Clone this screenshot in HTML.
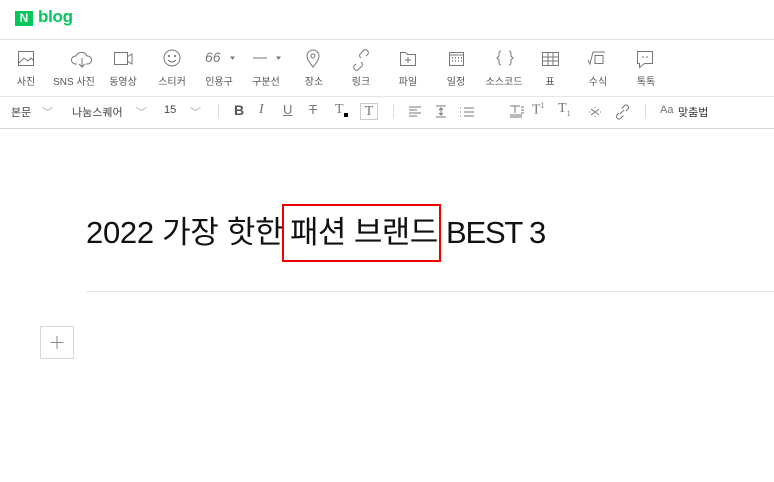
<!DOCTYPE html>
<html><head><meta charset="utf-8"><style>
*{margin:0;padding:0;box-sizing:border-box}
body{width:774px;height:482px;background:#fff;position:relative;overflow:hidden;font-family:"Liberation Sans","Noto Sans CJK KR",sans-serif;color:#333}
.a{position:absolute}
.hl{position:absolute;left:0;width:774px;height:1px;background:#e3e3e3}
.lab{position:absolute;top:73px;font-size:10px;color:#555;transform:translateX(-50%);white-space:nowrap}
.f{position:absolute;top:104px;font-size:11px;color:#444;white-space:nowrap}
.sep{position:absolute;top:104px;width:1px;height:14px;background:#ddd}
.t{position:absolute;top:213px;height:40px;line-height:40px;font-size:31px;color:#111;white-space:nowrap;letter-spacing:-0.3px;font-family:"Liberation Sans","Noto Sans CJK KR",sans-serif}
</style></head><body>
<div class="a" style="left:15px;top:11px;width:18px;height:15px;background:#03c75a;color:#fff;font-weight:bold;font-size:12px;text-align:center;line-height:15px">N</div>
<div class="a" style="left:38px;top:7px;font-size:17px;font-weight:bold;color:#03c75a;letter-spacing:-0.3px">blog</div>
<div class="hl" style="top:39px"></div>
<div class="hl" style="top:96px;background:#e6e6e6"></div>
<div class="hl" style="top:128px;background:#d6d6d6"></div>

<svg class="a" style="left:0;top:44px" width="774" height="28" fill="none" stroke="#777" stroke-width="1">
<rect x="18.5" y="7.5" width="15" height="14"/><path d="M19 19l5-5 4 3 3-3 3 3"/>
<path d="M77 20h-2a4 4 0 0 1 1-8a6 6 0 0 1 11 0a4 4 0 0 1 1 8h-2M82 14v9M79 20l3 3 3-3"/>
<rect x="114.5" y="8.5" width="13" height="12"/><path d="M127 13l5-3v10l-5-3"/>
<circle cx="172" cy="14" r="8"/><circle cx="169" cy="12" r=".6" fill="#777"/><circle cx="175" cy="12" r=".6" fill="#777"/><path d="M168 16q4 4 8 0"/>
<path d="M253 14h14"/><path d="M277 13l3 0-1.5 2z" fill="#777"/><path d="M231 13l3 0-1.5 2z" fill="#777"/>
<path d="M313 23q-6-7-6-11a6 6 0 0 1 12 0q0 4-6 11z"/><circle cx="313" cy="12" r="2"/>
<path d="M356 18l-2 2a3 3 0 0 0 4 4l4-4a3 3 0 0 0-1-4M366 10l2-2a3 3 0 0 0-4-4l-4 4a3 3 0 0 0 1 4" transform="translate(0,2)"/>
<path d="M400.5 8.5h5l2 2h8v11h-15z"/><path d="M408 13v6M405 16h6"/>
<rect x="449.5" y="8.5" width="14" height="13"/><path d="M449 11h15" /><path d="M452 14h1M455 14h1M458 14h1M461 14h1M452 17h1M455 17h1M458 17h1M461 17h1" stroke-width="1.4"/>
<path d="M501 7q-2 0-2 3v2l-2 2 2 2v2q0 3 2 3M509 7q2 0 2 3v2l2 2-2 2v2q0 3-2 3"/>
<rect x="542.5" y="8.5" width="16" height="13"/><path d="M542 13h16M542 17h16M548 8v13M553 8v13"/>
<path d="M588 16l2 4 3-12h12M595 11.5h8v8h-8z"/>
<path d="M637.5 7.5h15v12h-8l-5 4v-4h-2z"/><path d="M643 12v2M647 12v2"/>
</svg>
<div class="a" style="left:205px;top:49px;font-size:14px;color:#777;font-style:italic">66</div>
<div class="lab" style="left:26px">사진</div>
<div class="lab" style="left:74px">SNS 사진</div>
<div class="lab" style="left:123px">동영상</div>
<div class="lab" style="left:172px">스티커</div>
<div class="lab" style="left:219px">인용구</div>
<div class="lab" style="left:266px">구분선</div>
<div class="lab" style="left:314px">장소</div>
<div class="lab" style="left:361px">링크</div>
<div class="lab" style="left:408px">파일</div>
<div class="lab" style="left:456px">일정</div>
<div class="lab" style="left:504px">소스코드</div>
<div class="lab" style="left:550px">표</div>
<div class="lab" style="left:598px">수식</div>
<div class="lab" style="left:646px">톡톡</div>

<div class="f" style="left:11px">본문</div>
<div class="f" style="left:42px;color:#aaa">﹀</div>
<div class="f" style="left:72px">나눔스퀘어</div>
<div class="f" style="left:136px;color:#aaa">﹀</div>
<div class="f" style="left:164px">15</div>
<div class="f" style="left:190px;color:#aaa">﹀</div>
<div class="sep" style="left:218px"></div>
<div class="f" style="left:234px;font-weight:bold;font-size:14px;top:102px;color:#555">B</div>
<div class="f" style="left:259px;font-style:italic;font-size:14px;top:102px;font-family:'Liberation Serif';color:#777">I</div>
<div class="f" style="left:283px;text-decoration:underline;font-size:13px;top:102px;color:#777">U</div>
<div class="f" style="left:309px;text-decoration:line-through;font-size:13px;top:102px;color:#777">T</div>
<div class="f" style="left:335px;font-size:14px;top:102px;font-family:'Liberation Serif';color:#777">T</div>
<div class="a" style="left:344px;top:113px;width:4px;height:4px;background:#000"></div>
<div class="a" style="left:360px;top:103px;width:18px;height:17px;border:1px solid #ccc;font-family:'Liberation Serif';font-size:14px;text-align:center;line-height:15px;color:#777">T</div>
<div class="sep" style="left:393px"></div>
<svg class="a" style="left:405px;top:104px" width="300" height="16" fill="none" stroke="#777" stroke-width="1">
<path d="M4 3h12M4 6h8M4 9h12M4 12h8"/>
<path d="M31 2h10M31 13h10M36 4v7M34 6l2-2 2 2M34 9l2 2 2-2"/>
<path d="M55 4h1M55 8h1M55 12h1M59 4h10M59 8h10M59 12h10"/>
<path d="M105 2h10M110 2v7M105 11h12M105 13h12M116 3h3M116 6h3M116 9h3"/>
<path d="M186 5l8 6M194 5l-8 6M190 3v1M190 12v1M184 8h1M195 8h1"/>
<path d="M214 9l-2 2a2.5 2.5 0 0 0 3.5 3.5l3-3M221 7l2-2a2.5 2.5 0 0 0-3.5-3.5l-3 3M215 10l4-4"/>
</svg>
<div class="f" style="left:532px;font-size:14px;top:101px;font-family:'Liberation Serif';color:#777">T<sup style="font-size:8px">1</sup></div>
<div class="f" style="left:558px;font-size:14px;top:101px;font-family:'Liberation Serif';color:#777">T<sub style="font-size:8px">1</sub></div>
<div class="sep" style="left:645px"></div>
<div class="f" style="left:660px;color:#777">Aa</div>
<div class="f" style="left:678px;color:#333">맞춤법</div>

<div class="t" style="left:86px">2022 가장 핫한</div>
<div class="t" style="left:290px;letter-spacing:-0.6px">패션 브랜드</div>
<div class="t" style="left:446px;letter-spacing:-1.2px">BEST 3</div>
<div class="a" style="left:282px;top:204px;width:159px;height:58px;border:2px solid #e00"></div>
<div class="a" style="left:86px;top:291px;width:688px;height:1px;background:#e3e3e3"></div>
<div class="a" style="left:40px;top:326px;width:34px;height:33px;border:1px solid #d6d6d6"></div>
<svg class="a" style="left:40px;top:326px" width="34" height="33" stroke="#888" stroke-width="1"><path d="M17 10v13M10.5 16.5h13"/></svg>
</body></html>
